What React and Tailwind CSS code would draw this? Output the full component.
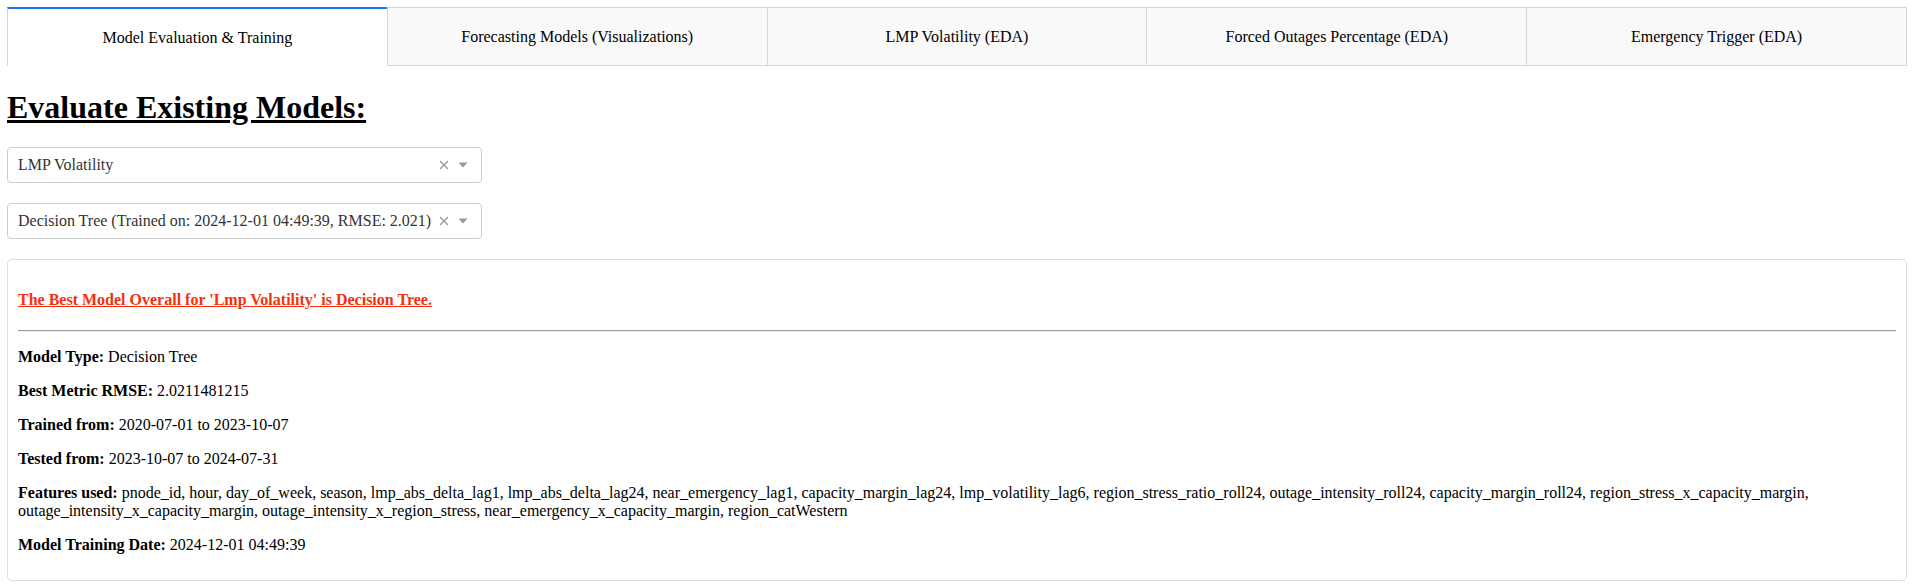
import React from "react";

const tabs = [
  "Model Evaluation & Training",
  "Forecasting Models (Visualizations)",
  "LMP Volatility (EDA)",
  "Forced Outages Percentage (EDA)",
  "Emergency Trigger (EDA)",
];

function Dropdown({ value, className }) {
  return (
    <div
      className={
        "flex h-[36px] w-1/4 items-center rounded-[4px] border border-[#cccccc] bg-white pl-[10px] pr-[8px] " +
        className
      }
    >
      <span className="flex-1 truncate text-[16px] text-[#333333]">{value}</span>
      <svg width="10" height="10" viewBox="0 0 10 10" className="mr-[9px] shrink-0">
        <path d="M1 1 L9 9 M9 1 L1 9" stroke="#999999" strokeWidth="1.4" />
      </svg>
      <svg width="10" height="6" viewBox="0 0 10 6" className="mr-[5px] shrink-0">
        <path d="M0.5 0.5 L9.5 0.5 L5 5.5 Z" fill="#999999" />
      </svg>
    </div>
  );
}

function Row({ label, children }) {
  return (
    <p className="my-[16px] text-[16px] leading-[18px]">
      <strong className="font-bold">{label}</strong> {children}
    </p>
  );
}

export default function App() {
  return (
    <div className="min-h-[586px] bg-white px-[7px] pt-[7px] font-['Liberation_Serif','Times_New_Roman',serif] text-black">
      <div className="flex h-[59px]">
        {tabs.map((t, i) =>
          i === 0 ? (
            <div
              key={t}
              className="flex flex-1 items-center justify-center border-l border-t-2 border-l-[#d6d6d6] border-t-[#1975FA] bg-white text-[16px]"
            >
              {t}
            </div>
          ) : (
            <div
              key={t}
              className="flex flex-1 items-center justify-center border-y border-l border-[#d6d6d6] bg-[#f9f9f9] text-[16px] last:border-r"
            >
              {t}
            </div>
          )
        )}
      </div>

      <h1 className="mt-[23px] mb-[21px] text-[32px] font-bold leading-[37px] underline">
        Evaluate Existing Models:
      </h1>

      <Dropdown value="LMP Volatility" className="mb-[20px]" />
      <Dropdown
        value="Decision Tree (Trained on: 2024-12-01 04:49:39, RMSE: 2.021)"
        className="mb-[20px]"
      />

      <div className="rounded-[5px] border border-[#dddddd] p-[10px]">
        <h4 className="mt-[21px] mb-[21px] text-[16px] font-bold leading-[18px] text-[#f5310d] underline">
          The Best Model Overall for 'Lmp Volatility' is Decision Tree.
        </h4>
        <hr className="m-0 h-0 border-t border-b border-t-[#9a9a9a] border-b-[#eeeeee]" />
        <Row label="Model Type:">Decision Tree</Row>
        <Row label="Best Metric RMSE:">2.0211481215</Row>
        <Row label="Trained from:">2020-07-01 to 2023-10-07</Row>
        <Row label="Tested from:">2023-10-07 to 2024-07-31</Row>
        <Row label="Features used:">
          pnode_id, hour, day_of_week, season, lmp_abs_delta_lag1, lmp_abs_delta_lag24,
          near_emergency_lag1, capacity_margin_lag24, lmp_volatility_lag6,
          region_stress_ratio_roll24, outage_intensity_roll24, capacity_margin_roll24,
          region_stress_x_capacity_margin, outage_intensity_x_capacity_margin,
          outage_intensity_x_region_stress, near_emergency_x_capacity_margin, region_catWestern
        </Row>
        <Row label="Model Training Date:">2024-12-01 04:49:39</Row>
      </div>
    </div>
  );
}
